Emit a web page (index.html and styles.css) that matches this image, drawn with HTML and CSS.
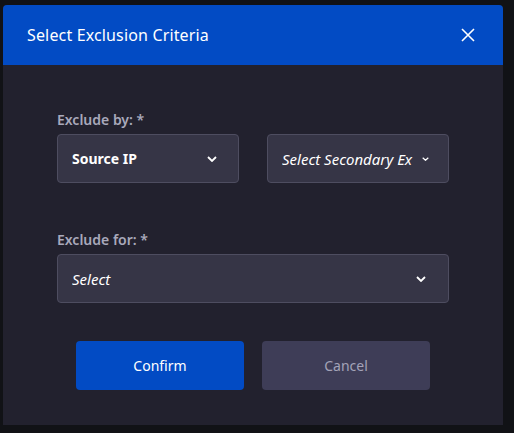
FILE: index.html
```html
<!DOCTYPE html>
<html lang="en">
<head>
  <meta charset="UTF-8">
  <meta name="viewport" content="width=device-width, initial-scale=1.0">
  <title>Select Exclusion Criteria</title>
  <link rel="stylesheet" href="styles.css">
</head>
<body>
  <div class="modal">
    <div class="modal-header">
      <h2>Select Exclusion Criteria</h2>
      <button class="close" aria-label="Close">
        <svg width="14" height="14" viewBox="0 0 14 14"><path d="M1 1 L13 13 M13 1 L1 13" stroke="#fff" stroke-width="1.6" fill="none"/></svg>
      </button>
    </div>

    <div class="modal-body">
      <label class="field-label">Exclude by: *</label>
      <div class="select-row">
        <div class="select bold">
          <span class="value">Source IP</span>
          <svg class="chevron" width="10" height="6" viewBox="0 0 10 6"><path d="M1 1 L5 5 L9 1" stroke="#fff" stroke-width="1.8" fill="none"/></svg>
        </div>
        <div class="select italic narrow">
          <span class="value">Select Secondary Ex</span>
          <svg class="chevron small" width="7" height="4" viewBox="0 0 7 4"><path d="M0.7 0.7 L3.5 3.3 L6.3 0.7" stroke="#fff" stroke-width="1.2" fill="none"/></svg>
        </div>
      </div>

      <label class="field-label second">Exclude for: *</label>
      <div class="select italic wide">
        <span class="value">Select</span>
        <svg class="chevron" width="10" height="6" viewBox="0 0 10 6"><path d="M1 1 L5 5 L9 1" stroke="#fff" stroke-width="1.8" fill="none"/></svg>
      </div>

      <div class="actions">
        <button class="btn confirm">Confirm</button>
        <button class="btn cancel">Cancel</button>
      </div>
    </div>
  </div>
</body>
</html>
```

FILE: styles.css
```css
body {
  margin: 0;
  padding: 0;
  background-color: #111216;
  font-family: "Noto Sans", "Open Sans", sans-serif;
  height: 433px;
  overflow: hidden;
}

.modal {
  width: 500px;
  margin: 5px 0 0 3px;
  background-color: #22212e;
  border-radius: 4px 4px 0 0;
  overflow: hidden;
}

.modal-header {
  height: 60px;
  background-color: #024bc4;
  display: flex;
  align-items: center;
  justify-content: space-between;
  padding: 0 28px 0 24px;
}

.modal-header h2 {
  margin: 0;
  font-size: 16px;
  font-weight: 400;
  letter-spacing: 0.15px;
  color: #ffffff;
}

.close {
  background: none;
  border: none;
  padding: 0;
  display: flex;
  cursor: pointer;
}

.modal-body {
  padding: 46px 54px 35px;
  display: flex;
  flex-direction: column;
}

.field-label {
  font-size: 14px;
  font-weight: 600;
  line-height: 18px;
  color: #a9a9bb;
  margin-bottom: 5px;
}

.field-label.second {
  margin-top: 48px;
}

.select-row {
  display: flex;
  gap: 28px;
}

.select {
  box-sizing: border-box;
  height: 49px;
  width: 182px;
  display: flex;
  align-items: center;
  padding: 0 21px 0 14px;
  background-color: #363546;
  border: 1px solid #4e4d60;
  border-radius: 4px;
  color: #ffffff;
  font-size: 14px;
}

.select .value {
  flex: 1;
  min-width: 0;
  white-space: nowrap;
  overflow: hidden;
}

.select.bold {
  font-weight: 700;
}

.select.italic {
  font-style: italic;
  font-size: 15px;
}

.select.narrow {
  padding-right: 19px;
}

.select.narrow .chevron {
  margin-left: 4px;
}

.select.wide {
  width: 392px;
  padding-right: 22px;
}

.chevron {
  flex-shrink: 0;
}

.actions {
  display: flex;
  justify-content: center;
  gap: 18px;
  margin-top: 38px;
}

.btn {
  width: 168px;
  height: 49px;
  border: none;
  border-radius: 4px;
  font-family: "Noto Sans", "Open Sans", sans-serif;
  font-size: 14px;
  cursor: pointer;
}

.btn.confirm {
  background-color: #024bc4;
  color: #ffffff;
}

.btn.cancel {
  background-color: #3e3d57;
  color: #a3a3b7;
}
```
